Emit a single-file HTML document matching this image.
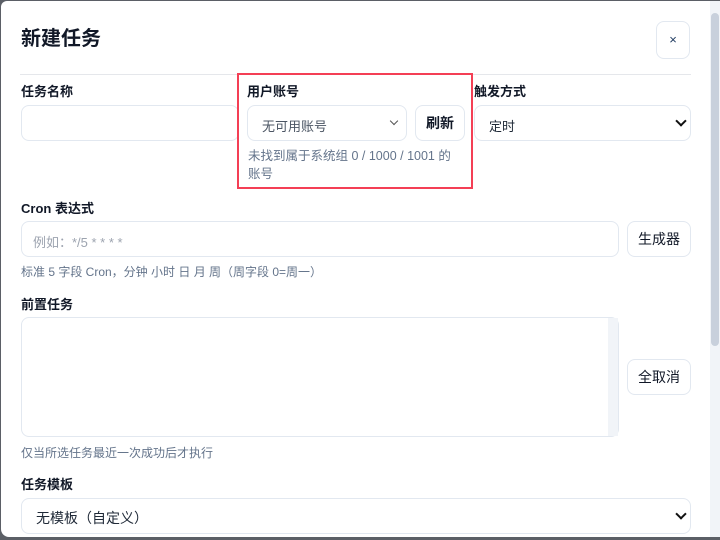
<!DOCTYPE html>
<html><head><meta charset="utf-8"><style>
*{box-sizing:border-box;margin:0;padding:0}
html,body{width:720px;height:540px;overflow:hidden;background:#5b5f66}
body{font-family:"Liberation Sans","Noto Sans CJK SC",sans-serif;color:#1f2937;position:relative}
.modal{position:absolute;left:1px;top:1px;width:719px;height:536px;background:#fff;border-radius:6px 0 0 8px;overflow:hidden}
.in{position:absolute;left:-1px;top:-1px;width:720px;height:540px}
.abs{position:absolute}
h1{position:absolute;left:21px;top:22px;font-size:20px;font-weight:700;color:#111827}
.close{left:656px;top:21px;width:34px;height:38px;border:1px solid #e2e8f0;border-radius:8px;font-size:13px;text-align:center;line-height:36px;color:#1e3a5f}
.hr{left:20px;top:74px;width:671px;height:1px;background:#e5e7eb}
.lbl{font-size:13px;font-weight:700;color:#111827}
.box{border:1px solid #e2e8f0;border-radius:8px;background:#fff}
.txt{font-size:13px}
.btn{border:1px solid #e2e8f0;border-radius:8px;font-size:14px;text-align:center;color:#111827;background:#fff}
.hint{font-size:12px;color:#64748b}
.chev{position:absolute;width:8px;height:8px;border-right:2px solid #111;border-bottom:2px solid #111;transform:rotate(45deg)}
.sb{left:710px;top:0;width:10px;height:540px;background:#f1f4f8}
.thumb{left:711px;top:13px;width:8px;height:333px;background:#c8d0dc;border-radius:4px}
</style></head><body>
<div class="modal"><div class="in">
<h1>新建任务</h1>
<div class="abs close">×</div>
<div class="abs hr"></div>

<div class="abs lbl" style="left:21px;top:81px">任务名称</div>
<div class="abs box" style="left:21px;top:105px;width:218px;height:36px"></div>

<div class="abs lbl" style="left:247px;top:81px">用户账号</div>
<div class="abs box" style="left:247px;top:105px;width:160px;height:36px"><span class="abs txt" style="left:14px;top:10px;color:#4b5563">无可用账号</span><div class="chev" style="left:143px;top:12px;width:6px;height:6px;border-color:#555;border-width:1.5px"></div></div>
<div class="abs btn" style="left:415px;top:105px;width:50px;height:36px;line-height:34px;font-weight:600">刷新</div>
<div class="abs hint" style="left:248px;top:147px;width:214px;line-height:18px;font-size:12.5px">未找到属于系统组 0 / 1000 / 1001 的账号</div>
<div class="abs" style="left:237px;top:73px;width:236px;height:116px;border:2px solid #f43f55"></div>

<div class="abs lbl" style="left:474px;top:81px">触发方式</div>
<div class="abs box" style="left:474px;top:105px;width:217px;height:36px"><span class="abs txt" style="left:14px;top:10px">定时</span><div class="chev" style="left:202px;top:11px"></div></div>

<div class="abs lbl" style="left:21px;top:198px">Cron 表达式</div>
<div class="abs box" style="left:21px;top:221px;width:598px;height:36px"><span class="abs txt" style="left:11px;top:10px;color:#9ca3af">例如：*/5 * * * *</span></div>
<div class="abs btn" style="left:627px;top:221px;width:64px;height:36px;line-height:34px">生成器</div>
<div class="abs hint" style="left:21px;top:263px">标准 5 字段 Cron，分钟 小时 日 月 周（周字段 0=周一）</div>

<div class="abs lbl" style="left:21px;top:294px">前置任务</div>
<div class="abs box" style="left:21px;top:317px;width:598px;height:120px"><div class="abs" style="left:586px;top:0;width:10px;height:118px;background:#f1f4f8"></div></div>
<div class="abs btn" style="left:627px;top:359px;width:64px;height:36px;line-height:34px">全取消</div>
<div class="abs hint" style="left:21px;top:444px">仅当所选任务最近一次成功后才执行</div>

<div class="abs lbl" style="left:21px;top:474px">任务模板</div>
<div class="abs box" style="left:21px;top:498px;width:670px;height:36px"><span class="abs" style="left:14px;top:9px;font-size:14px">无模板（自定义）</span><div class="chev" style="left:655px;top:11px"></div></div>

<div class="abs sb"></div>
<div class="abs thumb"></div>
</div></div>
</body></html>
